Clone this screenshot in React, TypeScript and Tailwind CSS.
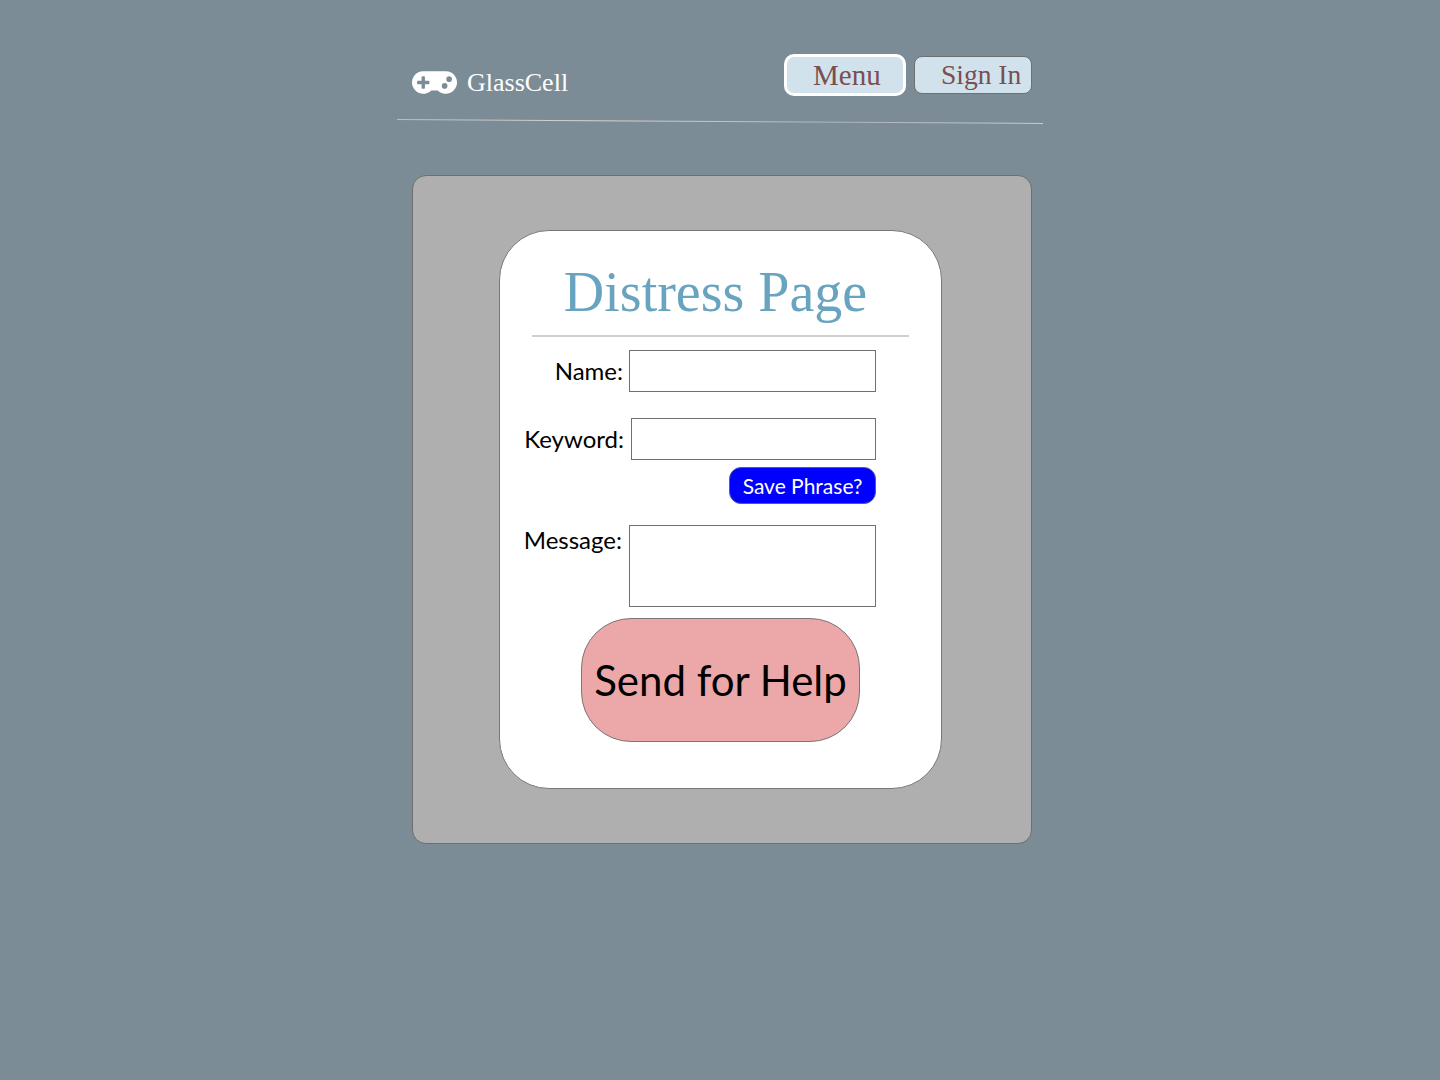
import { FaGamepad } from "react-icons/fa";

const serif = "font-['Liberation_Serif',serif]";
const sans = "font-['Lato',sans-serif]";

export default function App() {
  return (
    <div className={`min-h-[1080px] bg-[#7b8c96] ${sans}`}>
      <div className="mx-auto flex w-[646px] flex-col pt-[54px]">
        <header className="flex h-[42px] items-start justify-between pl-[15px] pr-[11px]">
          <div className="mt-[6px] flex items-center gap-[10px] text-white">
            <FaGamepad size={45} />
            <span className={`${serif} text-[26px] leading-[30px]`}>GlassCell</span>
          </div>
          <nav className="flex items-center gap-[8px]">
            <button className={`${serif} h-[42px] w-[122px] rounded-[10px] border-[3px] border-white bg-[#d1e2ec] pl-[26px] text-left text-[29px] leading-none text-[#7a4f50]`}>
              Menu
            </button>
            <button className={`${serif} h-[38px] w-[118px] rounded-[8px] border border-[#6f6f6f] bg-[#d1e2ec] pl-[26px] text-left text-[27.5px] leading-none text-[#7a4f50]`}>
              Sign In
            </button>
          </nav>
        </header>
        <hr className="mt-[25px] h-px rotate-[0.355deg] border-0 bg-[linear-gradient(90deg,#b9bec2,#d8d0cc_30%,#aeb4b8_70%,#c8ccce)]" />
        <main className="ml-[15px] mr-[11px] mt-[53px] rounded-[14px] border border-[#6f6f6f] bg-[#afafaf] pb-[54px] pl-[86px] pr-[89px] pt-[54px]">
          <section className="h-[559px] w-[443px] rounded-[50px] border border-[#777] bg-white px-[32px]">
            <h1 className={`${serif} h-[104px] pr-[10px] pt-[31px] text-center text-[56px] leading-[60px] text-[#68a4bf]`}>
              Distress Page
            </h1>
            <hr className="h-[2px] border-0 bg-[#d0d0d0]" />
            <div className="mr-[33px] mt-[13px] flex flex-col text-[24px] leading-[30px] text-black">
              <label className="flex items-center justify-end gap-[6px]">
                <span>Name:</span>
                <input className="h-[42px] w-[247px] shrink-0 border border-[#707070] bg-white" />
              </label>
              <label className="mt-[26px] flex items-center justify-end gap-[7px]">
                <span>Keyword:</span>
                <input className="h-[42px] w-[245px] shrink-0 border border-[#707070] bg-white" />
              </label>
              <div className="mt-[7px] flex justify-end">
                <button className="h-[37px] w-[147px] rounded-[12px] border border-[#5a5a9a] bg-[#0000ff] text-[21px] leading-none text-white">
                  Save Phrase?
                </button>
              </div>
              <label className="mt-[21px] flex items-start justify-end gap-[7px]">
                <span>Message:</span>
                <textarea className="h-[82px] w-[247px] shrink-0 resize-none border border-[#707070] bg-white" />
              </label>
            </div>
            <div className="mt-[11px] flex justify-center">
              <button className="h-[124px] w-[279px] rounded-[50px] border border-[#777] bg-[#eca8a8] text-[42px] leading-none text-black">
                Send for Help
              </button>
            </div>
          </section>
        </main>
      </div>
    </div>
  );
}
